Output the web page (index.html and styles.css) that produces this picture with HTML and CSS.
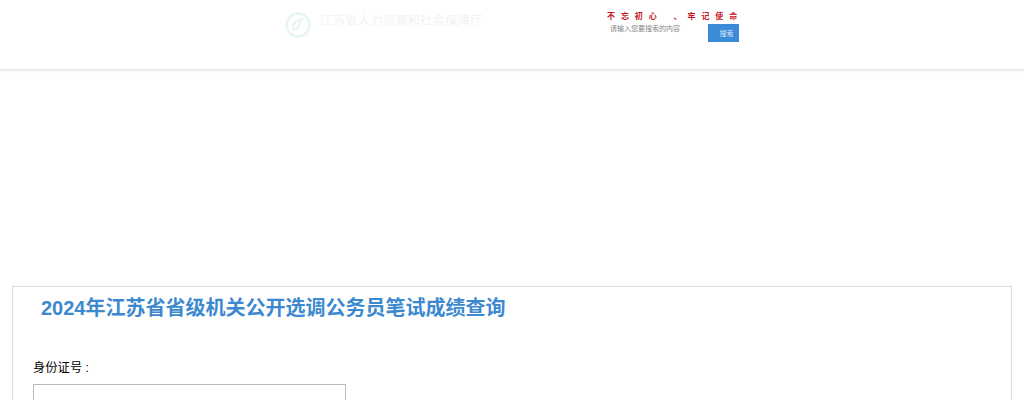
FILE: index.html
```html
<!DOCTYPE html>
<html lang="zh-CN">

<head>
    <meta charset="UTF-8">
    <meta name="viewport" content="width=device-width, initial-scale=1.0">
    <title>成绩查询</title>
    <link rel="stylesheet" href="styles.css">
</head>

<body>
    <header class="header">
        <div class="header-inner">
            <div class="brand">
                <svg class="brand-logo" width="26" height="26" viewBox="0 0 26 26">
                    <circle cx="13" cy="13" r="11.5" fill="none" stroke="#e6f6f2" stroke-width="2.5" />
                    <path d="M8 17c0-5 3-9 9-10-1 2-2 3-3 5 0 3-2 6-6 5z" fill="none" stroke="#e6f6f2" stroke-width="2" />
                </svg>
                <span class="brand-name">江苏省人力资源和社会保障厅</span>
            </div>
            <div class="header-side">
                <div class="motto">
                    <span>不忘初心</span>
                    <span class="motto-end">、牢记使命</span>
                </div>
                <div class="search">
                    <span class="search-input">请输入您要搜索的内容</span>
                    <button class="search-button">搜索</button>
                </div>
            </div>
        </div>
    </header>

    <main class="card">
        <h1 class="card-title">2024年江苏省省级机关公开选调公务员笔试成绩查询</h1>
        <label class="field-label" for="idNumber">身份证号 :</label>
        <input class="field-input" id="idNumber" type="text">
    </main>
</body>

</html>
```

FILE: styles.css
```css
html,
body {
    height: 400px;
    overflow: hidden;
}

body {
    margin: 0;
    background-color: #fff;
    font-family: "Liberation Sans", "Noto Sans CJK SC", sans-serif;
}

.header {
    height: 69px;
    box-shadow: 0 1px 3px rgba(0, 0, 0, 0.16);
}

.header-inner {
    display: flex;
    justify-content: space-between;
    width: 454px;
    margin-left: 285px;
}

.brand {
    display: flex;
    align-items: flex-start;
    gap: 9px;
    padding-top: 12px;
}

.brand-name {
    margin-top: 1px;
    font-size: 12.5px;
    line-height: 16px;
    color: #f1f3f3;
    white-space: nowrap;
}

.header-side {
    display: flex;
    flex-direction: column;
    width: 132px;
    padding-top: 11px;
}

.motto {
    display: flex;
    height: 13px;
    font-size: 8px;
    line-height: 11px;
    font-weight: bold;
    color: #c8161d;
    letter-spacing: 5.9px;
    white-space: nowrap;
}

.motto-end {
    margin-left: 11px;
}

.search {
    display: flex;
    justify-content: space-between;
}

.search-input {
    margin-left: 3px;
    font-size: 7px;
    line-height: 10px;
    color: #888;
    white-space: nowrap;
}

.search-button {
    width: 31px;
    height: 18px;
    padding: 0 0 0 6px;
    border: none;
    background-color: #3a8ad8;
    color: #dcebf8;
    font-family: inherit;
    font-size: 7px;
}

.card {
    display: flex;
    flex-direction: column;
    align-items: flex-start;
    height: 300px;
    margin: 217px 12px 0;
    padding: 0 20px;
    border: 1px solid #ddd;
}

.card-title {
    margin: 8px 0 0 8px;
    font-size: 20px;
    line-height: 26px;
    font-weight: bold;
    color: #3c89d0;
}

.field-label {
    margin-top: 39px;
    font-size: 12.3px;
    line-height: 16px;
    color: #000;
}

.field-input {
    box-sizing: border-box;
    width: 313px;
    height: 34px;
    margin-top: 8px;
    border: 1px solid #bbb;
}
```
